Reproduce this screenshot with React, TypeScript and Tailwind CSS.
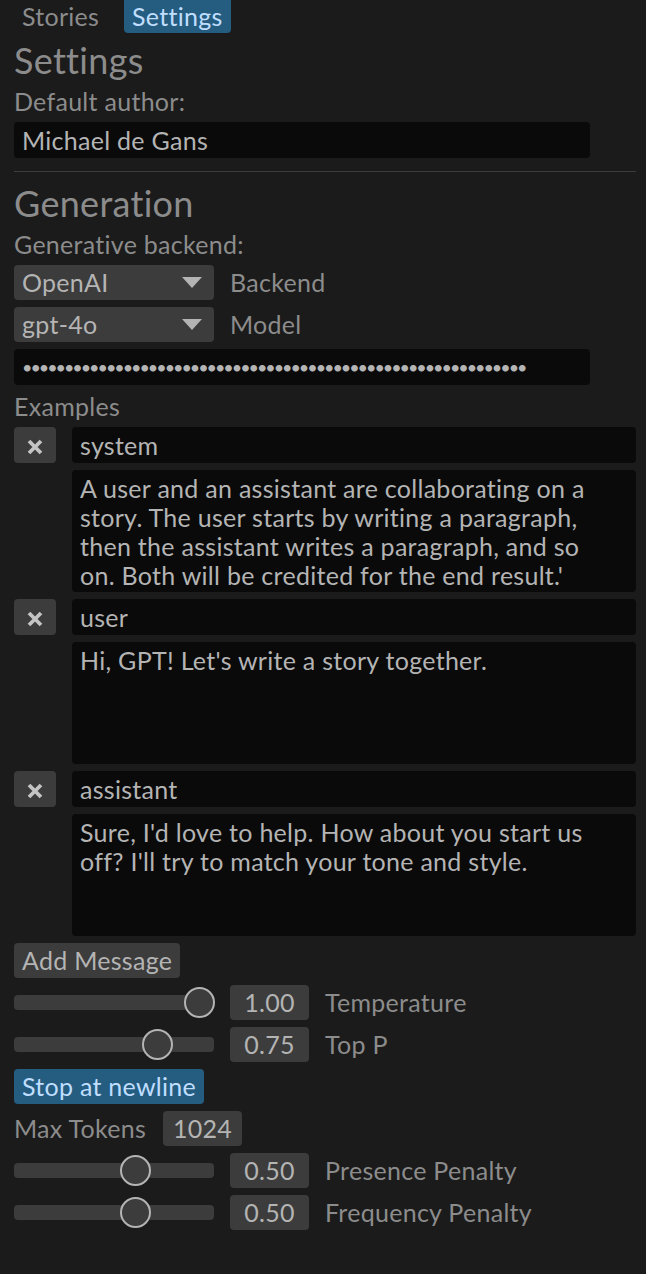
import React from 'react';

const examples = [
  {
    role: 'system',
    lines: [
      'A user and an assistant are collaborating on a',
      'story. The user starts by writing a paragraph,',
      'then the assistant writes a paragraph, and so',
      "on. Both will be credited for the end result.'",
    ],
  },
  { role: 'user', lines: ["Hi, GPT! Let's write a story together."] },
  {
    role: 'assistant',
    lines: ["Sure, I'd love to help. How about you start us", "off? I'll try to match your tone and style."],
  },
];

const Label = ({ children }: { children: React.ReactNode }) => (
  <div className="h-[28px] flex items-center text-[#8c8c8c]">{children}</div>
);

const Heading = ({ children }: { children: React.ReactNode }) => (
  <div className="h-[40px] flex items-center text-[36px] tracking-[0.3px] text-[#8c8c8c]">{children}</div>
);

const Combo = ({ value, label }: { value: string; label: string }) => (
  <div className="flex items-center gap-[16px]">
    <div className="w-[200px] h-[35px] bg-[#3c3c3c] rounded-[4px] pl-[8px] pr-[12px] flex items-center justify-between text-[#b4b4b4]">
      <span>{value}</span>
      <svg width="20" height="12" viewBox="0 0 20 12">
        <path d="M0 0 H20 L10 11 Z" fill="#b4b4b4" />
      </svg>
    </div>
    <span className="text-[#8c8c8c]">{label}</span>
  </div>
);

const Slider = ({ t, value, label }: { t: number; value: string; label: string }) => (
  <div className="h-[35px] flex items-center">
    <div className="relative w-[200px] h-[35px] flex items-center">
      <div className="w-full h-[15px] bg-[#3c3c3c] rounded-[4px]" />
      <div
        className="absolute top-[2px] w-[31px] h-[31px] rounded-full border-2 border-[#b4b4b4] bg-[#3c3c3c]"
        style={{ left: t * 170 }}
      />
    </div>
    <div className="ml-[16px] w-[79px] h-[35px] bg-[#3c3c3c] rounded-[4px] flex items-center justify-center text-[#b4b4b4]">
      {value}
    </div>
    <span className="ml-[16px] text-[#8c8c8c]">{label}</span>
  </div>
);

const CloseIcon = () => (
  <svg width="16" height="16" viewBox="0 0 16 16" className="mt-[3px]">
    <path d="M2 2 L14 14 M14 2 L2 14" stroke="#c4c4c4" strokeWidth="3.8" strokeLinecap="butt" />
  </svg>
);

export default function App() {
  return (
    <div className="min-h-[1274px] bg-[#1b1b1b] font-['Lato',sans-serif] text-[25px] tracking-[0.28px] leading-none">
      {/* Tabs */}
      <div className="h-[33px] flex items-center pl-[14px] gap-[16px]">
        <div className="w-[94px] h-[33px] px-[8px] flex items-center text-[#8c8c8c]">Stories</div>
        <div className="w-[107px] h-[33px] px-[8px] flex items-center rounded-b-[4px] bg-[#245d80] text-[#c0deff]">
          Settings
        </div>
      </div>

      <div className="pl-[14px] pr-[10px] pt-[7px] flex flex-col gap-[7px]">
        <Heading>Settings</Heading>
        <Label>Default author:</Label>
        <div className="w-[576px] h-[36px] bg-[#0a0a0a] rounded-[4px] px-[8px] flex items-center text-[#b4b4b4]">
          Michael de Gans
        </div>

        <div className="h-[11px] flex items-start pt-[6px]">
          <div className="w-full h-px bg-[#3c3c3c]" />
        </div>

        <Heading>Generation</Heading>
        <Label>Generative backend:</Label>
        <Combo value="OpenAI" label="Backend" />
        <Combo value="gpt-4o" label="Model" />
        <div className="w-[576px] h-[36px] bg-[#0a0a0a] rounded-[4px] px-[8px] flex items-center overflow-hidden whitespace-nowrap text-[#b4b4b4] text-[18px] tracking-[-2.05px]">
          {'•'.repeat(60)}
        </div>

        <Label>Examples</Label>
        {examples.map((ex) => (
          <div key={ex.role} className="flex flex-col gap-[7px]">
            <div className="flex items-center gap-[16px]">
              <div className="w-[42px] h-[36px] bg-[#3c3c3c] rounded-[4px] flex items-center justify-center">
                <CloseIcon />
              </div>
              <div className="flex-1 h-[36px] bg-[#0a0a0a] rounded-[4px] px-[8px] flex items-center text-[#b4b4b4]">
                {ex.role}
              </div>
            </div>
            <div className="ml-[58px] h-[122px] bg-[#0a0a0a] rounded-[4px] px-[8px] pt-[4px] text-[#b4b4b4] leading-[29px]">
              {ex.lines.map((l) => (
                <div key={l}>{l}</div>
              ))}
            </div>
          </div>
        ))}

        <div className="flex">
          <div className="h-[35px] px-[8px] bg-[#3c3c3c] rounded-[4px] flex items-center text-[#b4b4b4]">Add Message</div>
        </div>
        <Slider t={1} value="1.00" label="Temperature" />
        <Slider t={0.75} value="0.75" label="Top P" />
        <div className="flex">
          <div className="h-[35px] px-[8px] bg-[#245d80] rounded-[4px] flex items-center text-[#c0deff]">Stop at newline</div>
        </div>
        <div className="h-[35px] flex items-center">
          <span className="text-[#8c8c8c]">Max Tokens</span>
          <div className="ml-[17px] w-[79px] h-[35px] bg-[#3c3c3c] rounded-[4px] flex items-center justify-center text-[#b4b4b4]">
            1024
          </div>
        </div>
        <Slider t={0.625} value="0.50" label="Presence Penalty" />
        <Slider t={0.625} value="0.50" label="Frequency Penalty" />
      </div>
    </div>
  );
}
